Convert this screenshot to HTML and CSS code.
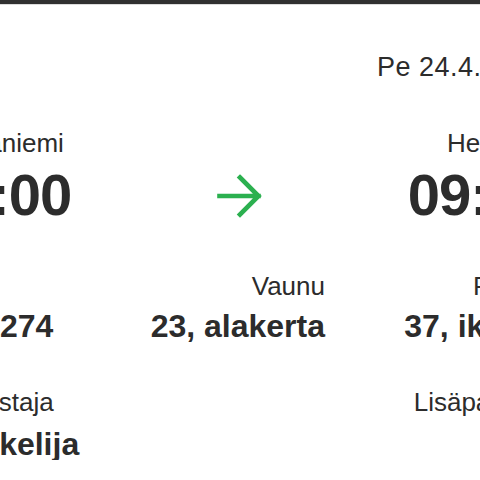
FILE: index.html
```html
<!DOCTYPE html>
<html lang="fi">
<head>
<meta charset="utf-8">
<title>Lippu</title>
<link rel="stylesheet" href="styles.css">
</head>
<body>
<div class="topbar"></div>
<main class="ticket">
  <div class="date-cell"><span class="date">Pe 24.4.2026</span></div>

  <div class="field start row2">
    <div class="label station-from">Rovaniemi</div>
    <div class="time">21:00</div>
  </div>
  <div class="arrow-cell row2">
    <svg class="arrow" viewBox="0 0 46 44" width="46" height="44" aria-hidden="true">
      <path d="M2.5 22 H41.5 M23 3.5 L41.5 22 L23 40.5" fill="none" stroke="#2bb04f" stroke-width="4.6" stroke-linecap="square" stroke-linejoin="miter"/>
    </svg>
  </div>
  <div class="field end row2">
    <div class="label station-to">Helsinki</div>
    <div class="time">09:05</div>
  </div>

  <div class="field start row3">
    <div class="label">Juna</div>
    <div class="value train">IC 274</div>
  </div>
  <div class="field end row3">
    <div class="label">Vaunu</div>
    <div class="value">23, alakerta</div>
  </div>
  <div class="field end row3">
    <div class="label">Paikka</div>
    <div class="value seat">37, ikkuna</div>
  </div>

  <div class="field start row4">
    <div class="label">Matkustaja</div>
    <div class="value">Opiskelija</div>
  </div>
  <div class="field empty row4"></div>
  <div class="field end row4">
    <div class="label">Lisäpalvelut</div>
    <div class="value">Ei</div>
  </div>
</main>
</body>
</html>
```

FILE: styles.css
```css
html, body {
  margin: 0;
  padding: 0;
  background: #ffffff;
  overflow: hidden;
}

body {
  font-family: "Liberation Sans", Arial, sans-serif;
  color: #2c2c2c;
}

.topbar {
  height: 4px;
  background: #303030;
  border-bottom: 1px solid #dcdcdc;
}

.ticket {
  width: 623px;
  margin-left: -72px;
  display: grid;
  grid-template-columns: repeat(3, 171px);
  column-gap: 55px;
}

.date-cell {
  grid-column: 3;
  padding-top: 49px;
  white-space: nowrap;
}

.date {
  display: block;
  font-size: 27px;
  line-height: 27px;
  letter-spacing: 0.5px;
  margin-left: -3px;
}

.field {
  display: flex;
  flex-direction: column;
  white-space: nowrap;
}

.field.start {
  align-items: flex-start;
}

.field.end {
  align-items: flex-end;
}

.label {
  font-size: 26px;
  line-height: 26px;
}

.station-from {
  margin-left: 13px;
}

.station-to {
  margin-right: 13px;
}

.time {
  font-size: 58px;
  line-height: 58px;
  font-weight: 700;
  margin-top: 10px;
  letter-spacing: -1px;
}

.value {
  font-size: 32px;
  line-height: 32px;
  font-weight: 700;
  margin-top: 11px;
}

.value.train {
  margin-left: 31px;
}

.value.seat {
  margin-right: -8px;
}

.row2 {
  margin-top: 49px;
}

.arrow-cell {
  display: flex;
  justify-content: center;
  align-items: flex-end;
  padding-bottom: 6px;
}

.arrow {
  display: block;
}

.row3 {
  margin-top: 49px;
}

.row4 {
  margin-top: 47px;
}

.row4 .value {
  margin-top: 13px;
}
```
